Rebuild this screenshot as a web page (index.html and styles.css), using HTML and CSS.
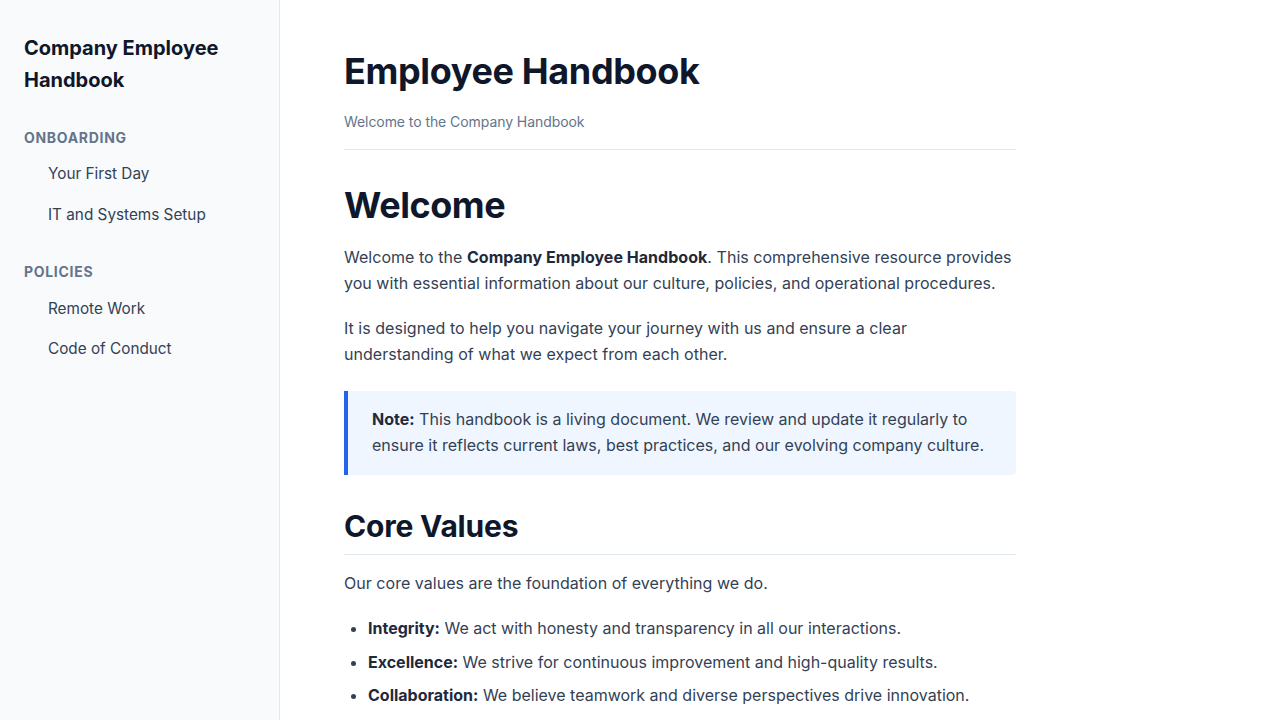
FILE: index.html
```html
<!DOCTYPE html>
<html lang="en">
<head>
<meta charset="utf-8">
<title>Employee Handbook</title>
<link rel="stylesheet" href="styles.css">
</head>
<body>
<div class="layout">
  <aside class="sidebar">
    <div class="brand">Company Employee Handbook</div>
    <nav>
      <div class="nav-group">
        <div class="nav-label">Onboarding</div>
        <a class="nav-link" href="#">Your First Day</a>
        <a class="nav-link" href="#">IT and Systems Setup</a>
      </div>
      <div class="nav-group">
        <div class="nav-label">Policies</div>
        <a class="nav-link" href="#">Remote Work</a>
        <a class="nav-link" href="#">Code of Conduct</a>
      </div>
    </nav>
  </aside>
  <main class="main">
    <div class="content">
      <header class="page-header">
        <h1 class="page-title">Employee Handbook</h1>
        <p class="page-sub">Welcome to the Company Handbook</p>
      </header>
      <h2 class="h-welcome">Welcome</h2>
      <p>Welcome to the <strong>Company Employee Handbook</strong>. This comprehensive resource provides you with essential information about our culture, policies, and operational procedures.</p>
      <p>It is designed to help you navigate your journey with us and ensure a clear understanding of what we expect from each other.</p>
      <div class="note"><strong>Note:</strong> This handbook is a living document. We review and update it regularly to ensure it reflects current laws, best practices, and our evolving company culture.</div>
      <h2 class="h-section">Core Values</h2>
      <p>Our core values are the foundation of everything we do.</p>
      <ul class="values">
        <li><strong>Integrity:</strong> We act with honesty and transparency in all our interactions.</li>
        <li><strong>Excellence:</strong> We strive for continuous improvement and high-quality results.</li>
        <li><strong>Collaboration:</strong> We believe teamwork and diverse perspectives drive innovation.</li>
      </ul>
    </div>
  </main>
</div>
</body>
</html>
```

FILE: styles.css
```css
* { box-sizing: border-box; }
html, body { margin: 0; padding: 0; height: 100%; }
body {
  font-family: Inter, "Noto Sans", "Liberation Sans", sans-serif;
  color: #334155;
  background: #ffffff;
  overflow: hidden;
}
.layout {
  display: flex;
  height: 720px;
}
.sidebar {
  width: 280px;
  flex: 0 0 280px;
  background: #f8fafc;
  border-right: 1px solid #e2e8f0;
  padding: 32px 24px;
}
.brand {
  font-size: 20px;
  font-weight: 700;
  line-height: 32px;
  color: #0f172a;
  margin-bottom: 32px;
}
.nav-group { margin-bottom: 27px; }
.nav-label {
  font-size: 14px;
  font-weight: 700;
  letter-spacing: 0.05em;
  text-transform: uppercase;
  color: #64748b;
  line-height: 20px;
  margin-bottom: 6px;
}
.nav-link {
  display: block;
  padding: 10px 24px;
  font-size: 15.3px;
  line-height: 20px;
  color: #334155;
  text-decoration: none;
  margin-bottom: 1px;
}
.nav-group:last-child .nav-link { margin-bottom: 0; padding: 10.5px 24px 9.5px; }
.main {
  flex: 1;
  padding: 49px 64px;
}
.content {
  max-width: 672px;
}
.page-header {
  border-bottom: 1px solid #e2e8f0;
  padding-bottom: 16px;
  margin-bottom: 33px;
}
.page-title {
  margin: 0 0 18px;
  font-size: 36px;
  line-height: 44px;
  font-weight: 700;
  color: #0f172a;
  letter-spacing: -0.01em;
}
.page-sub {
  margin: 0;
  font-size: 14px;
  line-height: 22px;
  color: #64748b;
  letter-spacing: -0.005em;
}
h2 { color: #0f172a; font-weight: 700; }
.h-welcome {
  font-size: 36px;
  line-height: 44px;
  margin: 0 0 17px;
  letter-spacing: -0.012em;
}
.h-section {
  font-size: 30px;
  line-height: 38px;
  margin: 32px 0 15px;
  padding-bottom: 9px;
  border-bottom: 1px solid #e2e8f0;
  letter-spacing: -0.007em;
}
p {
  font-size: 16px;
  line-height: 26px;
  margin: 0 0 19px;
  letter-spacing: 0.002em;
}
strong { font-weight: 700; color: #1e293b; }
.note {
  margin: 24px 0 0;
  background: #eff6ff;
  border-left: 4px solid #2563eb;
  border-radius: 0 4px 4px 0;
  padding: 15px 24px 17px;
  font-size: 16px;
  line-height: 26px;
}
.values {
  margin: 0;
  padding-left: 24px;
  font-size: 16px;
  line-height: 26px;
}
.values li { margin-bottom: 7.5px; }
```
